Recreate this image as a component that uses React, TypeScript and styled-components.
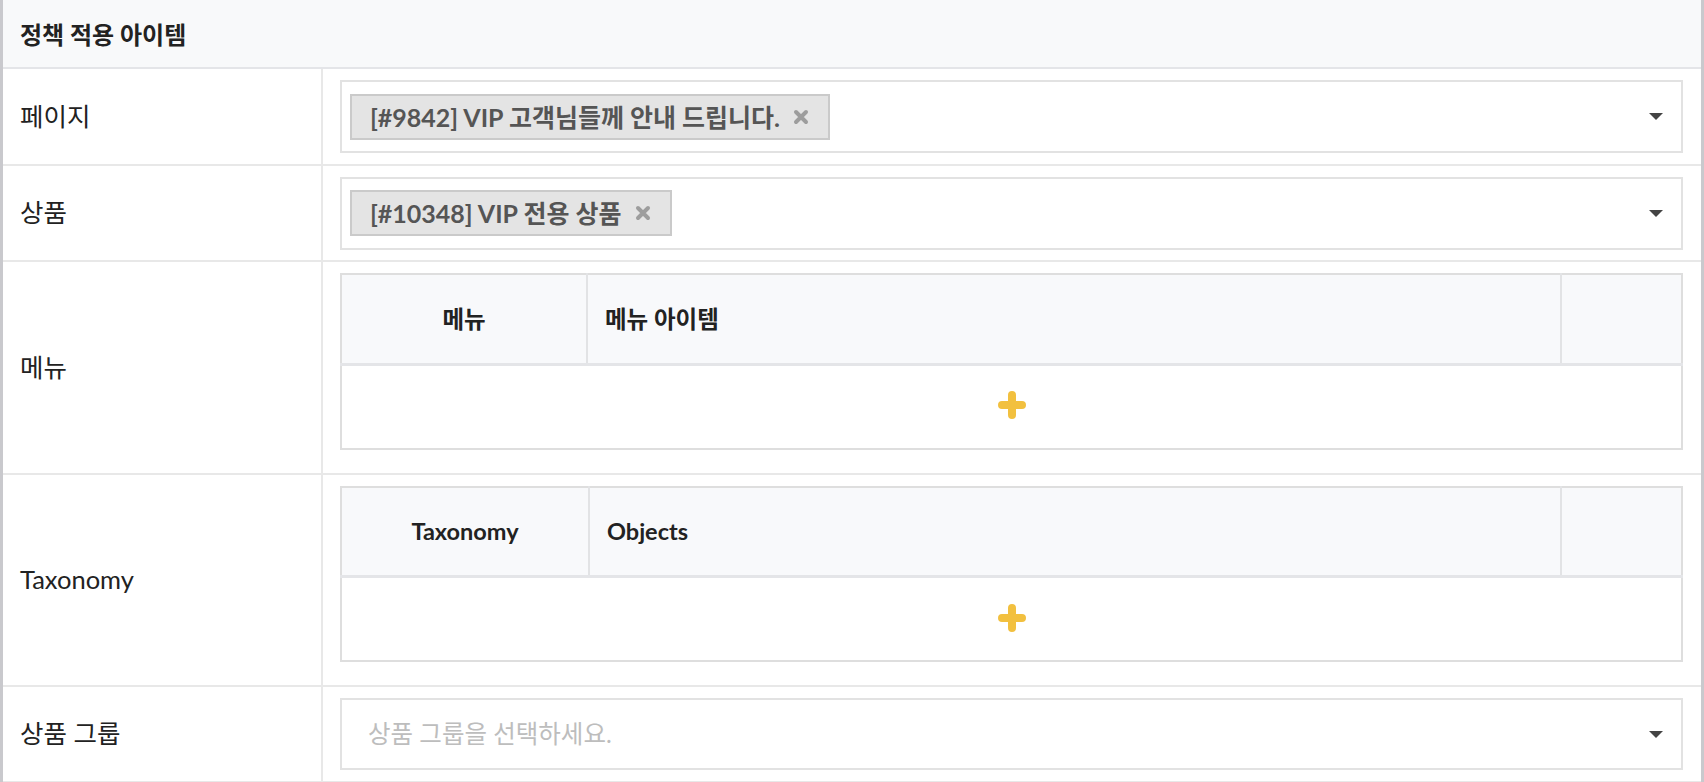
import React from 'react';
import styled, { createGlobalStyle } from 'styled-components';

const GlobalStyle = createGlobalStyle`
  body {
    margin: 0;
    background: #ffffff;
    font-family: 'Lato', 'Noto Sans CJK KR', sans-serif;
    color: #222222;
  }
`;

type SelectedItem = { id: number; title: string };

type FieldDef =
  | { kind: 'select'; label: string; items: SelectedItem[]; placeholder?: string }
  | { kind: 'table'; label: string; columns: [string, string]; firstWidth: number };

const fields: FieldDef[] = [
  { kind: 'select', label: '페이지', items: [{ id: 9842, title: 'VIP 고객님들께 안내 드립니다.' }] },
  { kind: 'select', label: '상품', items: [{ id: 10348, title: 'VIP 전용 상품' }] },
  { kind: 'table', label: '메뉴', columns: ['메뉴', '메뉴 아이템'], firstWidth: 246 },
  { kind: 'table', label: 'Taxonomy', columns: ['Taxonomy', 'Objects'], firstWidth: 248 },
  { kind: 'select', label: '상품 그룹', items: [], placeholder: '상품 그룹을 선택하세요.' },
];

export default function App() {
  return (
    <>
      <GlobalStyle />
      <Panel>
        <PanelHeader>정책 적용 아이템</PanelHeader>
        {fields.map(field => (
          <FieldRow key={field.label}>
            <FieldLabel>{field.label}</FieldLabel>
            {field.kind === 'select' ? (
              <FieldBody>
                <Select $empty={field.items.length === 0}>
                  <SelectValues>
                    {field.items.length === 0 && <Placeholder>{field.placeholder}</Placeholder>}
                    {field.items.map(item => (
                      <Tag key={item.id}>
                        [#{item.id}] {item.title}
                        <TagRemove aria-label="삭제">
                          <CrossIcon />
                        </TagRemove>
                      </Tag>
                    ))}
                  </SelectValues>
                  <Caret />
                </Select>
              </FieldBody>
            ) : (
              <FieldBody $table>
                <RepeatTable>
                  <thead>
                    <tr>
                      <HeadCell $width={field.firstWidth} $center>
                        {field.columns[0]}
                      </HeadCell>
                      <HeadCell>{field.columns[1]}</HeadCell>
                      <HeadCell $width={121} />
                    </tr>
                  </thead>
                  <tbody>
                    <tr>
                      <AddCell colSpan={3}>
                        <AddButton aria-label="추가">
                          <PlusIcon />
                        </AddButton>
                      </AddCell>
                    </tr>
                  </tbody>
                </RepeatTable>
              </FieldBody>
            )}
          </FieldRow>
        ))}
      </Panel>
    </>
  );
}

function PlusIcon() {
  return (
    <svg width="28" height="28" viewBox="0 0 28 28">
      <path
        d="M14 4v20M4 14h20"
        stroke="#f2c03f"
        strokeWidth="8"
        strokeLinecap="round"
        fill="none"
      />
    </svg>
  );
}

function CrossIcon() {
  return (
    <svg width="16" height="16" viewBox="0 0 16 16">
      <path
        d="M3 3l10 10M13 3l-10 10"
        stroke="#9d9d9d"
        strokeWidth="4"
        strokeLinecap="round"
        fill="none"
      />
    </svg>
  );
}

const Panel = styled.section`
  min-height: 100vh;
  box-sizing: border-box;
  border-left: 3px solid #c9c9cd;
  border-right: 3px solid #c9c9cd;
  background: #ffffff;
`;

const PanelHeader = styled.h2`
  margin: 0;
  height: 67px;
  display: flex;
  align-items: center;
  padding-left: 17px;
  background: #f8f9fa;
  border-bottom: 2px solid #e4e5e8;
  font-size: 24px;
  font-weight: 700;
  color: #222222;
`;

const FieldRow = styled.div`
  display: grid;
  grid-template-columns: 320px 1fr;
  border-bottom: 2px solid #e8e8e8;
`;

const FieldLabel = styled.div`
  display: flex;
  align-items: center;
  padding-left: 17px;
  border-right: 2px solid #e8e8e8;
  font-size: 25.5px;
  line-height: 1.3;
  color: #222222;
`;

const FieldBody = styled.div<{ $table?: boolean }>`
  padding: 11px 18px ${({ $table }) => ($table ? '23px' : '10.5px')} 17px;
`;

const Select = styled.div<{ $empty: boolean }>`
  box-sizing: border-box;
  height: ${({ $empty }) => ($empty ? '72px' : '73px')};
  display: flex;
  align-items: center;
  justify-content: space-between;
  padding: 0 18px 0 8px;
  border: 2px solid #e2e2e2;
  background: #ffffff;
`;

const SelectValues = styled.div`
  display: flex;
  align-items: center;
  gap: 8px;
`;

const Placeholder = styled.span`
  padding-left: 18px;
  font-size: 24.5px;
  line-height: 1.2;
  color: #bdbdbd;
`;

const Tag = styled.span`
  box-sizing: border-box;
  height: 46px;
  display: inline-flex;
  align-items: center;
  gap: 13px;
  padding: 0 19px 0 18px;
  border: 2px solid #cacaca;
  background: #e4e4e4;
  font-size: 25px;
  line-height: 1.2;
  font-weight: 700;
  color: #555555;
`;

const TagRemove = styled.span`
  display: inline-flex;
  align-items: center;
`;

const Caret = styled.span`
  width: 0;
  height: 0;
  border-left: 7px solid transparent;
  border-right: 7px solid transparent;
  border-top: 7px solid #444444;
`;

const RepeatTable = styled.table`
  width: 100%;
  border-collapse: collapse;
  table-layout: fixed;
  border: 2px solid #dedede;
`;

const HeadCell = styled.th<{ $width?: number; $center?: boolean }>`
  height: 90px;
  padding: 0 17px;
  width: ${({ $width }) => ($width ? `${$width}px` : 'auto')};
  box-sizing: border-box;
  text-align: ${({ $center }) => ($center ? 'center' : 'left')};
  background: #f8f9fb;
  border-right: 2px solid #e2e3e5;
  border-bottom: 3px solid #e4e5e8;
  font-size: 23.5px;
  line-height: 1.2;
  font-weight: 700;
  color: #222222;

  &:last-child {
    border-right: none;
  }
`;

const AddCell = styled.td`
  height: 82px;
  padding: 0;
  text-align: center;
  vertical-align: middle;
`;

const AddButton = styled.button`
  display: inline-flex;
  align-items: center;
  justify-content: center;
  padding: 0;
  border: none;
  background: none;
  cursor: pointer;
`;
